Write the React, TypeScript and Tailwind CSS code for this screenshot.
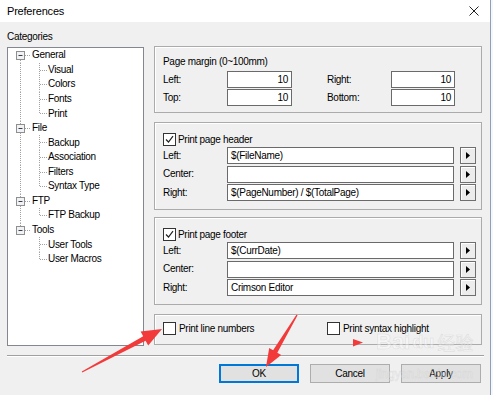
import React from "react";

type TreeNode = { label: string; children: string[] };
const tree: TreeNode[] = [
  { label: "General", children: ["Visual", "Colors", "Fonts", "Print"] },
  { label: "File", children: ["Backup", "Association", "Filters", "Syntax Type"] },
  { label: "FTP", children: ["FTP Backup"] },
  { label: "Tools", children: ["User Tools", "User Macros"] },
];

const RH = 14.57;
const DOT = { stroke: "#a0a0a0", strokeWidth: 1, strokeDasharray: "1 1" };

function RootRow({ label, first, last }: { label: string; first: boolean; last: boolean }) {
  return (
    <div className="h-[14.57px] flex items-center">
      <svg width="24" height={RH} viewBox={`0 0 24 ${RH}`} className="shrink-0">
        {!first && <line x1="12.5" y1="0" x2="12.5" y2="3" {...DOT} />}
        {!last && <line x1="12.5" y1="12" x2="12.5" y2={RH} {...DOT} />}
        <line x1="17" y1="7.5" x2="23" y2="7.5" {...DOT} />
        <rect x="8.5" y="3.5" width="8" height="8" fill="#f2f2f2" stroke="#8f8f8f" />
        <line x1="10.5" y1="7.5" x2="14.5" y2="7.5" stroke="#2b3f5c" />
      </svg>
      <span className="leading-none">{label}</span>
    </div>
  );
}

function ChildRow({ label, rootLast, childLast }: { label: string; rootLast: boolean; childLast: boolean }) {
  return (
    <div className="h-[14.57px] flex items-center">
      <svg width="40" height={RH} viewBox={`0 0 40 ${RH}`} className="shrink-0">
        {!rootLast && <line x1="12.5" y1="0" x2="12.5" y2={RH} {...DOT} />}
        <line x1="31.5" y1="0" x2="31.5" y2={childLast ? 7.5 : RH} {...DOT} />
        <line x1="32" y1="7.5" x2="39" y2="7.5" {...DOT} />
      </svg>
      <span className="leading-none">{label}</span>
    </div>
  );
}

function Checkbox({ checked }: { checked?: boolean }) {
  return (
    <span className="w-[13px] h-[13px] border border-[#333] bg-white flex items-center justify-center shrink-0">
      {checked && (
        <svg width="9" height="9" viewBox="0 0 9 9">
          <path d="M1 4.5 L3.5 7 L8 1.2" stroke="#222" strokeWidth="1.2" fill="none" />
        </svg>
      )}
    </span>
  );
}

function SmallInput({ value, w }: { value: string; w: string }) {
  return (
    <div className={`${w} h-[17px] border border-[#6a6a6a] bg-white flex items-center justify-end pr-[3px] leading-none`}>
      {value}
    </div>
  );
}

function ArrowBtn() {
  return (
    <div className="w-[16px] h-[17px] border border-[#6f6f6f] bg-[#ececec] shadow-[inset_1px_1px_0_#fff] flex items-center justify-center">
      <svg width="5" height="7" viewBox="0 0 5 7">
        <path d="M0 0 L4 3.5 L0 7 Z" fill="#000" />
      </svg>
    </div>
  );
}

function FieldRow({ label, value }: { label: string; value: string }) {
  return (
    <div className="flex items-center h-[17px]">
      <div className="w-[64px] leading-none">{label}</div>
      <div className="w-[227px] h-[17px] border border-[#6a6a6a] bg-white flex items-center pl-[3px] leading-none">
        {value}
      </div>
      <div className="ml-[6px]">
        <ArrowBtn />
      </div>
    </div>
  );
}

function HFGroup({ title, rows }: { title: string; rows: [string, string][] }) {
  return (
    <div className="h-[88px] border border-[#ababab] shadow-[inset_1px_1px_0_#fff] flex flex-col pl-[8px] pt-[10px]">
      <div className="flex items-center h-[13px]">
        <Checkbox checked />
        <span className="ml-[2px] leading-none">{title}</span>
      </div>
      <div className="mt-[1px] flex flex-col gap-[1.5px]">
        {rows.map(([l, v]) => (
          <FieldRow key={l} label={l} value={v} />
        ))}
      </div>
    </div>
  );
}

export default function App() {
  return (
    <div className="w-[493px] h-[395px] overflow-hidden relative flex bg-[#f0f0f0] text-[10px] tracking-[-0.3px] text-black font-['Liberation_Sans',Arial,sans-serif]">
      <div className="w-[490px] flex flex-col">
        {/* Title bar */}
        <div className="h-[22px] bg-white flex items-center justify-between pl-[7px] pr-[11px]">
          <span className="text-[11px] tracking-[-0.2px] leading-none">Preferences</span>
          <svg width="10" height="10" viewBox="0 0 10 10">
            <path d="M0.5 0.5 L9.5 9.5 M9.5 0.5 L0.5 9.5" stroke="#222" strokeWidth="1" />
          </svg>
        </div>

        {/* Body */}
        <div className="flex pl-[7px]">
          <div className="w-[137px] flex flex-col">
            <div className="h-[25px] flex items-end pb-[5px] leading-none">Categories</div>
            <div className="h-[299px] border border-[#828790] bg-white">
              <div className="flex flex-col">
                {tree.map((n, i) => (
                  <React.Fragment key={n.label}>
                    <RootRow label={n.label} first={i === 0} last={i === tree.length - 1} />
                    {n.children.map((c, j) => (
                      <ChildRow
                        key={c}
                        label={c}
                        rootLast={i === tree.length - 1}
                        childLast={j === n.children.length - 1}
                      />
                    ))}
                  </React.Fragment>
                ))}
              </div>
            </div>
          </div>

          <div className="ml-[10px] w-[328px] flex flex-col pt-[24px]">
            {/* Page margin */}
            <div className="h-[67px] border border-[#ababab] shadow-[inset_1px_1px_0_#fff] flex flex-col pl-[8px] pt-[9px]">
              <div className="h-[12px] leading-[12px]">Page margin (0~100mm)</div>
              <div className="mt-[3px] flex flex-col gap-[1px]">
                <div className="flex items-center h-[17px]">
                  <div className="w-[64px] leading-none">Left:</div>
                  <SmallInput value="10" w="w-[65px]" />
                  <div className="w-[35px]" />
                  <div className="w-[64px] leading-none">Right:</div>
                  <SmallInput value="10" w="w-[64px]" />
                </div>
                <div className="flex items-center h-[17px]">
                  <div className="w-[64px] leading-none">Top:</div>
                  <SmallInput value="10" w="w-[65px]" />
                  <div className="w-[35px]" />
                  <div className="w-[64px] leading-none">Bottom:</div>
                  <SmallInput value="10" w="w-[64px]" />
                </div>
              </div>
            </div>

            <div className="mt-[9px]">
              <HFGroup
                title="Print page header"
                rows={[
                  ["Left:", "$(FileName)"],
                  ["Center:", ""],
                  ["Right:", "$(PageNumber) / $(TotalPage)"],
                ]}
              />
            </div>
            <div className="mt-[7px]">
              <HFGroup
                title="Print page footer"
                rows={[
                  ["Left:", "$(CurrDate)"],
                  ["Center:", ""],
                  ["Right:", "Crimson Editor"],
                ]}
              />
            </div>

            <div className="mt-[9px] h-[31px] border border-[#ababab] shadow-[inset_1px_1px_0_#fff] flex items-start pl-[8px] pt-[7px]">
              <div className="w-[164px] flex items-center h-[13px]">
                <Checkbox />
                <span className="ml-[3px] leading-none">Print line numbers</span>
              </div>
              <div className="flex items-center h-[13px]">
                <Checkbox />
                <span className="ml-[3px] leading-none">Print syntax highlight</span>
              </div>
            </div>
          </div>
        </div>

        {/* Separator */}
        <div className="mt-[9px] ml-[7px] w-[477px] h-[2px] border-t border-[#a0a0a0] bg-white" />

        {/* Buttons */}
        <div className="mt-[7px] flex justify-end gap-[11px] pr-[9px]">
          <div className="w-[80px] h-[19px] border border-[#0078d7] shadow-[inset_0_0_0_1px_#0078d7] bg-[#e1e1e1] flex items-center justify-center leading-none">
            OK
          </div>
          <div className="w-[80px] h-[19px] border border-[#adadad] bg-[#e1e1e1] flex items-center justify-center leading-none">
            Cancel
          </div>
          <div className="w-[80px] h-[19px] border border-[#adadad] bg-[#e1e1e1] flex items-center justify-center leading-none">
            Apply
          </div>
        </div>
      </div>
      <div className="w-[1px] bg-[#8aa0bd]" />
      <div className="w-[2px] bg-[#f7f7f7]" />

      {/* Watermark */}
      <div className="absolute left-[376px] top-[330px] pointer-events-none flex flex-col text-[rgba(255,255,255,0.35)] [-webkit-text-stroke:0.5px_rgba(200,200,200,0.55)] tracking-normal">
        <div className="flex items-center h-[24px]">
          <span className="text-[22px] font-bold leading-none">Bai</span>
          <span className="text-[18px] font-bold leading-none ml-[2px]">du</span>
          <span className="text-[18px] leading-none ml-[3px] font-['Noto_Sans_CJK_SC',sans-serif]">经验</span>
        </div>
        <div className="mt-[14px] text-[12px] leading-none">jingyan.baidu.com</div>
      </div>

      {/* Annotation arrows */}
      <svg className="absolute left-0 top-0 pointer-events-none" width="493" height="395" viewBox="0 0 493 395">
        <polygon
          points="82.2,372.6 145.6,340.7 148.2,345.5 162,329 140.6,331.5 143.2,336.3 81.8,371.4"
          fill="#f23a3a"
        />
        <polygon
          points="297.6,315.3 277.3,352.8 281.2,355.1 266,367 269.2,347.9 273.1,350.2 296.4,314.7"
          fill="#f23a3a"
        />
        <polygon points="353,339 363,342.5 353,346.5" fill="#f23a3a" />
      </svg>
    </div>
  );
}
